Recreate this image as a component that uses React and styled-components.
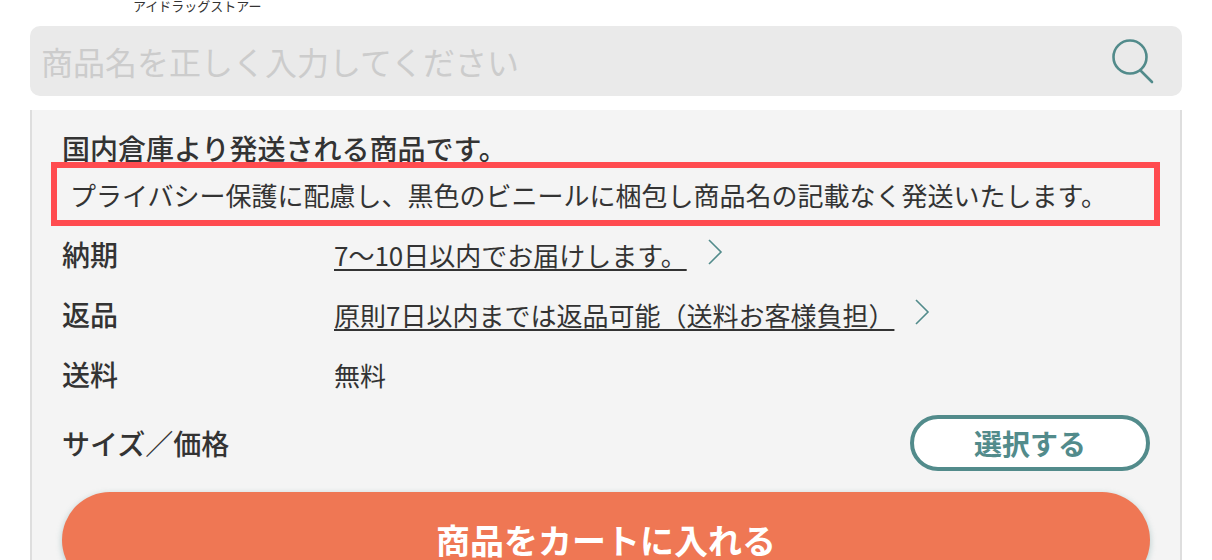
import React from "react";
import styled, { createGlobalStyle } from "styled-components";

const GlobalStyle = createGlobalStyle`
  html, body {
    margin: 0;
    padding: 0;
    background: #fff;
  }
  body {
    font-family: "Noto Sans CJK JP", "Noto Sans", sans-serif;
    color: #333;
  }
`;

const Page = styled.div`
  width: 1212px;
  height: 560px;
  overflow: hidden;
  box-sizing: border-box;
  padding: 0 30px;
`;

const Header = styled.div`
  height: 26px;
  padding-left: 103px;
  font-size: 13px;
  line-height: 11px;
  color: #333;
`;

const SearchBar = styled.div`
  height: 70px;
  border-radius: 10px;
  background: #eaeaea;
  display: flex;
  align-items: center;
  justify-content: space-between;
  padding: 0 28px 0 11px;
`;

const Placeholder = styled.span`
  font-size: 32px;
  line-height: 68px;
  color: #ccc;
`;

const Panel = styled.div`
  margin-top: 14px;
  height: 500px;
  box-sizing: border-box;
  background: #f4f4f4;
  border-left: 2px solid #dedede;
  border-right: 2px solid #dedede;
  padding: 18px 30px 0;
`;

const Heading = styled.div`
  font-size: 28px;
  line-height: 40px;
  font-weight: 500;
  height: 34px;
`;

const Notice = styled.div`
  position: relative;
  margin: 0 -10px 0 -11px;
  height: 64px;
  box-sizing: border-box;
  border: 6px solid #ff4b4f;
  display: flex;
  align-items: center;
  padding-left: 13px;
  font-size: 26px;
  white-space: nowrap;
`;

const Row = styled.div`
  display: flex;
  align-items: center;
  height: ${({ $height }) => $height}px;
`;

const Label = styled.div`
  width: 272px;
  font-size: 28px;
  font-weight: 500;
`;

const Value = styled.div`
  font-size: 26px;
`;

const LinkValue = styled.a`
  font-size: 26px;
  color: #333;
  text-decoration: underline;
  text-underline-offset: 3px;
  text-decoration-thickness: 2px;
`;

const Chevron = styled.svg`
  margin: -4px 0 0 20px;
  width: 16px;
  height: 28px;
  fill: none;
  stroke: #528b8b;
  stroke-width: 1.6;
`;

const SelectButton = styled.button`
  margin-left: auto;
  width: 240px;
  height: 56px;
  box-sizing: border-box;
  border: 4px solid #528b8b;
  border-radius: 28px;
  background: #fff;
  color: #528b8b;
  font-family: inherit;
  font-size: 28px;
  font-weight: 700;
  padding: 0;
`;

const CartButton = styled.button`
  display: block;
  width: 100%;
  height: 96px;
  margin-top: 8px;
  border: 0;
  border-radius: 50px;
  background: #ef7754;
  color: #fff;
  font-family: inherit;
  font-size: 34px;
  font-weight: 700;
  line-height: 96px;
  padding: 0;
  box-shadow: 0 2px 6px rgba(82, 139, 139, 0.4);
`;

const ChevronIcon = () => (
  <Chevron viewBox="0 0 16 28">
    <polyline points="2,2 14,14 2,26" />
  </Chevron>
);

const App = () => (
  <>
    <GlobalStyle />
    <Page>
      <Header>アイドラッグストアー</Header>
      <SearchBar>
        <Placeholder>商品名を正しく入力してください</Placeholder>
        <svg width="42" height="46" viewBox="0 0 42 46" fill="none" stroke="#528b8b" strokeWidth="2.6">
          <circle cx="18" cy="19" r="16.5" />
          <line x1="29" y1="33" x2="40" y2="44" strokeLinecap="round" />
        </svg>
      </SearchBar>
      <Panel>
        <Heading>国内倉庫より発送される商品です。</Heading>
        <Notice>プライバシー保護に配慮し、黒色のビニールに梱包し商品名の記載なく発送いたします。</Notice>
        <Row $height={56}>
          <Label>納期</Label>
          <LinkValue>7〜10日以内でお届けします。</LinkValue>
          <ChevronIcon />
        </Row>
        <Row $height={64}>
          <Label>返品</Label>
          <LinkValue>原則7日以内までは返品可能（送料お客様負担）</LinkValue>
          <ChevronIcon />
        </Row>
        <Row $height={56}>
          <Label>送料</Label>
          <Value>無料</Value>
        </Row>
        <Row $height={82}>
          <Label>サイズ／価格</Label>
          <SelectButton>選択する</SelectButton>
        </Row>
        <CartButton>商品をカートに入れる</CartButton>
      </Panel>
    </Page>
  </>
);

export default App;
